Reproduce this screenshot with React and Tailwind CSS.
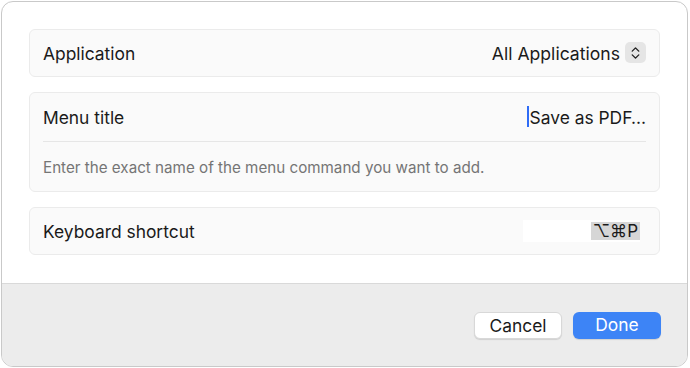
import { ChevronUp, ChevronDown } from 'lucide-react';

function Card({ children }) {
  return (
    <div className="rounded-[6px] border border-[#ebebeb] bg-[#fafafa]">
      {children}
    </div>
  );
}

function Row({ label, children }) {
  return (
    <div className="flex h-[46px] items-center justify-between px-[13px] pt-[3px]">
      <span className="text-[17.4px] text-[#1a1a1a]">{label}</span>
      {children}
    </div>
  );
}

export default function App() {
  return (
    <div className="h-[368px] w-[690px] bg-white p-px" style={{ fontFamily: 'Inter, "DejaVu Sans", sans-serif' }}>
      <div className="flex h-[366px] w-[687px] flex-col overflow-hidden rounded-[12px] border border-[#c9c9c9] bg-white">
        {/* fields */}
        <div className="flex flex-col gap-[15px] px-[27px] pt-[27px] pb-[28px]">
          <Card>
            <Row label="Application">
              <div className="-mt-[3px] flex items-center gap-[5px]">
                <span className="pt-[3px] text-[17.6px] text-[#1a1a1a]">All Applications</span>
                <span className="flex h-[21px] w-[21px] flex-col items-center justify-center rounded-[5px] bg-[#e5e5e5] text-[#222]">
                  <ChevronUp size={13} strokeWidth={2.6} className="-mb-[3px]" />
                  <ChevronDown size={13} strokeWidth={2.6} className="-mt-[3px]" />
                </span>
              </div>
            </Row>
          </Card>

          <Card>
            <div className="flex h-[48px] items-center justify-between px-[13px] pt-[3px]">
              <span className="text-[17.4px] text-[#1a1a1a]">Menu title</span>
              <div className="-mt-[3px] flex items-center">
                <span className="mr-px h-[21px] w-[2px] bg-[#2f6cf6]" />
                <span className="pt-[3px] text-[17.4px] text-[#1a1a1a]">Save as PDF…</span>
              </div>
            </div>
            <div className="mx-[13px] h-px bg-[#e6e6e6]" />
            <div className="flex h-[49px] items-center px-[13px] pt-[3px]">
              <span className="text-[15.2px] text-[#757575]">
                Enter the exact name of the menu command you want to add.
              </span>
            </div>
          </Card>

          <Card>
            <Row label="Keyboard shortcut">
              <div className="-mt-[3px] mr-[6px] flex h-[22px] w-[117px] items-center justify-end bg-white">
                <span className="flex h-[18px] items-center bg-[#d6d6d6] px-[2px] text-[17px] leading-none text-[#1a1a1a]">
                  ⌥⌘P
                </span>
              </div>
            </Row>
          </Card>
        </div>

        {/* footer */}
        <div className="flex flex-1 items-start justify-end gap-[11px] border-t border-[#d9d9d9] bg-[#ececec] pt-[28px] pr-[26px]">
          <button className="h-[27px] w-[88px] rounded-[6px] border border-[#d8d8d8] bg-white text-[17.4px] text-[#1a1a1a] shadow-[0_1px_1px_rgba(0,0,0,0.12)]">
            Cancel
          </button>
          <button className="h-[27px] w-[88px] rounded-[6px] bg-[#3d84f6] text-[17.4px] text-white shadow-[0_1px_1px_rgba(0,0,0,0.12)]">
            Done
          </button>
        </div>
      </div>
    </div>
  );
}
